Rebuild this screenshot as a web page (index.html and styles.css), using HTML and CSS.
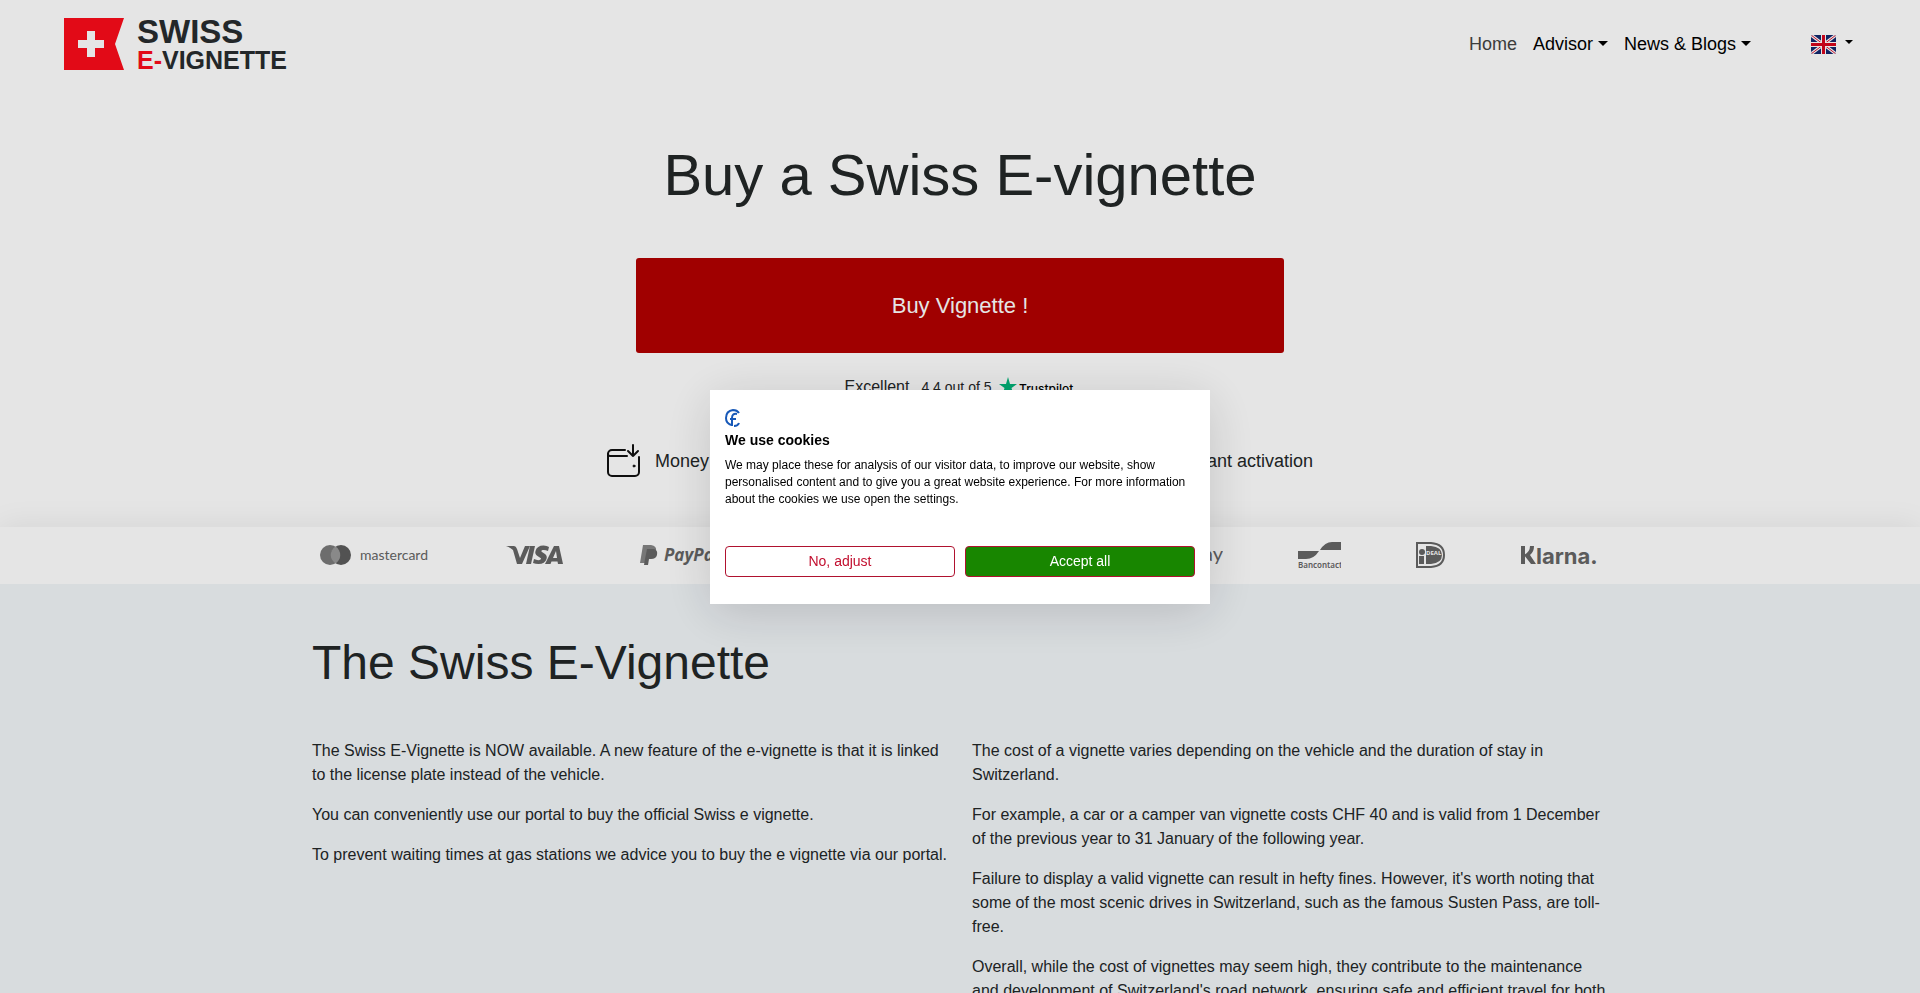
FILE: index.html
```html
<!DOCTYPE html>
<html lang="en">
<head>
<meta charset="utf-8">
<meta name="viewport" content="width=device-width, initial-scale=1">
<title>Buy a Swiss E-vignette</title>
<link rel="stylesheet" href="styles.css">
</head>
<body>
  <header class="header">
    <a href="#" class="logo" aria-label="Swiss E-Vignette">
      <svg width="240" height="64" viewBox="0 -6 240 64">
        <path fill="#fc0c1a" d="M0 0h60l-9 26 9 26H0z"/>
        <path fill="#fff" d="M23 13h8v9h9v8h-9v9h-8v-9h-9v-8h9z"/>
        <text class="logo-text" x="73" y="25" font-size="33">SWISS</text>
        <text class="logo-text" x="73" y="51" font-size="25"><tspan fill="#fc0c1a">E-</tspan>VIGNETTE</text>
      </svg>
    </a>
    <nav class="nav">
      <a href="#" class="nav-link active">Home</a>
      <a href="#" class="nav-link dropdown">Advisor</a>
      <a href="#" class="nav-link dropdown">News &amp; Blogs</a>
      <button type="button" class="lang" aria-label="Language">
        <svg width="25" height="19" viewBox="0 0 25 19">
          <clipPath id="flag"><rect width="25" height="19" rx="2"/></clipPath>
          <g clip-path="url(#flag)">
            <rect width="25" height="19" fill="#12286e"/>
            <path d="M0 0l25 19M25 0L0 19" stroke="#fff" stroke-width="3"/>
            <path d="M0 0l25 19M25 0L0 19" stroke="#dc1432" stroke-width="1"/>
            <path d="M12.5 0v19M0 9.5h25" stroke="#fff" stroke-width="5"/>
            <path d="M12.5 0v19M0 9.5h25" stroke="#d8061e" stroke-width="3"/>
          </g>
        </svg>
      </button>
    </nav>
  </header>

  <main>
    <section class="hero">
      <h1>Buy a Swiss E-vignette</h1>
      <a href="#" class="buy-btn">Buy Vignette !</a>
      <div class="trust">
        <span>Excellent</span>
        <span class="score">4.4 out of 5</span>
        <svg width="76" height="22" viewBox="0 0 76 22">
          <path fill="#00b67a" d="M9 1l2 7h7l-5.500 4 2 7L9 15l-5.500 4 2-7L0 8h7z"/>
          <text x="20" y="17" class="trust-text">Trustpilot</text>
        </svg>
      </div>
      <div class="features">
        <div class="feature">
          <svg width="33" height="33" viewBox="0 0 33 33" fill="none" stroke="#111" stroke-width="2" stroke-linecap="round" stroke-linejoin="round">
            <path d="M18 6H5a4 4 0 0 0-4 4v18a4 4 0 0 0 4 4h23a4 4 0 0 0 4-4V13"/>
            <path d="M1 10a2 2 0 0 0 2 2h17"/>
            <path d="M26 1v11M21 7l5 5 5-5"/>
            <circle cx="27" cy="22" r="1" fill="#111" stroke-width="1"/>
          </svg>
          Money back guarantee
        </div>
        <div class="feature">
          <svg width="33" height="33" viewBox="0 0 33 33" fill="none" stroke="#111" stroke-width="2" stroke-linejoin="round">
            <path d="M19 2L6 19h9l-2 12 14-18h-9z"/>
          </svg>
          Instant activation
        </div>
      </div>
    </section>

    <section class="payments">
      <div class="payments-list">
        <svg width="111" height="33" viewBox="0 0 111 33">
          <circle cx="10" cy="16" r="10" fill="#7a7a7a"/>
          <circle cx="21" cy="16" r="10" fill="#5c5c5c"/>
          <path d="M15.500 7.500a10 10 0 0 1 0 17a10 10 0 0 1 0-17z" fill="#999"/>
          <text x="40" y="21" font-family="Lato" font-size="14">mastercard</text>
        </svg>
        <svg width="57" height="33" viewBox="0 0 57 33">
          <path d="M0 7h8q2 0 3 3l3 9 5-12h5L16 25h-5L7 11Q4 8 0 7z"/>
          <path d="M24 7h5l-4 18h-5z"/>
          <path d="M43 8l-1 4q-3-1.500-5.500-1-2 .700-.500 2l3 2q2.500 2 1.500 5-1.500 5-8 5-3 0-5.500-1l1-4q3 1.500 5.500 1 2.500-.800 1-2l-3-2q-3-2-2-5Q31 6.500 37.500 6.500 41 6.600 43 8z"/>
          <path fill-rule="evenodd" d="M48 7h5l4 18h-5l-.500-2.500h-6L44.500 25H39zM50 12l-3 7h4z"/>
        </svg>
        <svg width="94" height="33" viewBox="-2 0 94 33">
          <path d="M3 6h8q6 1 5 6-1 6-8 6l-1 6H0z" fill="#858585"/>
          <path d="M7 10h7q4 1 3 6-1 4-6 4h-2l-1 6H4l1-6z"/>
          <text x="24" y="22" font-family="Open Sans" font-style="italic" font-weight="700" font-size="17">PayPal</text>
        </svg>
        <svg width="137" height="33" viewBox="0 0 137 33">
          <text x="4" y="21" font-family="Roboto" font-weight="700" font-size="15">American Express</text>
        </svg>
        <svg width="76" height="33" viewBox="0 0 76 33">
          <text x="0" y="21" font-family="Roboto" font-weight="500" font-size="16">Apple Pay</text>
        </svg>
        <svg width="54" height="33" viewBox="0 0 54 33">
          <text x="54" y="22" text-anchor="end" font-family="Lato" font-size="20">G Pay</text>
        </svg>
        <svg width="43" height="33" viewBox="0 0 43 33">
          <path d="M0 12h21q-5 8-13 8H0zM43 11H22q5-8 12-8h9z"/>
          <text x="0" y="29" font-family="Noto Sans" font-weight="600" font-size="8">Bancontact</text>
        </svg>
        <svg width="29" height="33" viewBox="0 0 29 33">
          <path d="M1 4h14q13 1 13 12T15 28H1z" fill="none" stroke="#666" stroke-width="2"/>
          <circle cx="6" cy="13" r="3"/>
          <path d="M3 17h5v8H3zM10 7h5q11 1 11 9t-11 9h-5z"/>
          <text x="10" y="16" font-family="Open Sans" font-weight="700" font-size="6" class="light">DEAL</text>
        </svg>
        <svg width="80" height="33" viewBox="0 0 80 33">
          <path d="M1 7h4v18H1zM10 7h4q0 6-4 9l6 9h-5l-7-9q6-3 6-9z"/>
          <text x="16" y="25" font-family="Inter" font-weight="700" font-size="22">larna.</text>
        </svg>
      </div>
    </section>

    <section class="info">
      <div class="container">
        <h2>The Swiss E-Vignette</h2>
        <div class="columns">
          <div>
            <p>The Swiss E-Vignette is NOW available. A new feature of the e-vignette is that it is linked to the license plate instead of the vehicle.</p>
            <p>You can conveniently use our portal to buy the official Swiss e vignette.</p>
            <p>To prevent waiting times at gas stations we advice you to buy the e vignette via our portal.</p>
          </div>
          <div>
            <p>The cost of a vignette varies depending on the vehicle and the duration of stay in Switzerland.</p>
            <p>For example, a car or a camper van vignette costs CHF 40 and is valid from 1 December of the previous year to 31 January of the following year.</p>
            <p>Failure to display a valid vignette can result in hefty fines. However, it's worth noting that some of the most scenic drives in Switzerland, such as the famous Susten Pass, are toll-free.</p>
            <p>Overall, while the cost of vignettes may seem high, they contribute to the maintenance and development of Switzerland's road network, ensuring safe and efficient travel for both residents and visitors.</p>
          </div>
        </div>
      </div>
    </section>
  </main>

  <div class="overlay">
    <div class="cookies" role="dialog" aria-labelledby="cookies-title">
      <svg width="16" height="18" viewBox="0 0 16 18" fill="none" stroke="#1859b8" stroke-width="2">
        <path d="M14 4Q12 1 8 1 1 2 1 9q0 5 5 7"/>
        <path d="M12 5Q7 4 7 9v8M5 10h6M9 17q4 0 5-3"/>
      </svg>
      <h3 id="cookies-title">We use cookies</h3>
      <p>We may place these for analysis of our visitor data, to improve our website, show personalised content and to give you a great website experience. For more information about the cookies we use open the settings.</p>
      <div class="cookies-buttons">
        <button type="button" class="btn-adjust">No, adjust</button>
        <button type="button" class="btn-accept">Accept all</button>
      </div>
    </div>
  </div>
</body>
</html>
```
FILE: styles.css
```css
* {
  box-sizing: border-box;
}

body {
  margin: 0;
  font-family: "Liberation Sans", Arial, sans-serif;
  font-size: 16px;
  line-height: 24px;
  color: #232728;
  background-color: #fff;
}

h1,
h2,
h3,
p {
  margin: 0;
}

h1,
h2 {
  font-weight: normal;
}

a {
  color: inherit;
  text-decoration: none;
}

svg {
  display: block;
  flex-shrink: 0;
}

/* Header */
.header {
  display: flex;
  justify-content: space-between;
  align-items: center;
  padding: 12px 63px 11px 64px;
}

.logo-text {
  font-weight: bold;
  fill: #282c2e;
}

.nav {
  display: flex;
  align-items: center;
  font-size: 18px;
  color: #000;
}

.nav-link {
  padding: 8px;
}

.nav-link.active {
  color: #444;
}

.dropdown::after,
.lang::after {
  content: "";
  display: inline-block;
  margin-left: 5px;
  vertical-align: 4px;
  border-top: 5px solid #000;
  border-left: 5px solid transparent;
  border-right: 5px solid transparent;
}

.lang {
  display: flex;
  align-items: center;
  gap: 4px;
  margin-left: 48px;
  padding: 4px;
  border: none;
  background: none;
  cursor: pointer;
}

.lang::after {
  margin-bottom: 4px;
  border-width: 4px;
  border-bottom: 0;
}

/* Hero */
.hero {
  display: flex;
  flex-direction: column;
  align-items: center;
  padding: 53px 12px 50px;
}

h1 {
  font-size: 58px;
  line-height: 70px;
  text-align: center;
}

.buy-btn {
  width: 100%;
  max-width: 648px;
  margin-top: 48px;
  padding: 32px;
  font-size: 22px;
  line-height: 31px;
  text-align: center;
  color: #fff;
  background-color: #b30000;
  border-radius: 3px;
}

.trust {
  display: flex;
  align-items: center;
  margin-top: 22px;
}

.score {
  margin: 0 8px 0 12px;
  font-size: 14px;
}

.trust-text {
  font-family: Inter, sans-serif;
  font-size: 12px;
  font-weight: 500;
}

.features {
  display: flex;
  justify-content: space-between;
  width: 100%;
  max-width: 706px;
  margin-top: 45px;
}

.feature {
  display: flex;
  align-items: center;
  gap: 15px;
  font-size: 18px;
}

/* Payment methods */
.payments {
  padding: 12px;
  background-color: #fff;
  box-shadow: 0 0 32px rgba(0, 0, 0, 0.08);
}

.payments-list {
  display: flex;
  flex-wrap: wrap;
  justify-content: space-between;
  max-width: 1280px;
  margin: 0 auto;
  fill: #666;
}

.light {
  fill: #fff;
}

/* Info */
.info {
  position: relative;
  padding: 50px 0;
  background-color: #f1f5f8;
}

.container {
  max-width: 1320px;
  margin: 0 auto;
  padding: 0 12px;
}

h2 {
  margin-bottom: 47px;
  font-size: 48px;
  line-height: 58px;
}

.columns {
  display: grid;
  grid-template-columns: 1fr 1fr;
  gap: 24px;
}

.columns p {
  margin-bottom: 16px;
}

/* Cookie dialog */
.overlay {
  position: fixed;
  inset: 0;
  display: flex;
  align-items: center;
  justify-content: center;
  background-color: rgba(0, 0, 0, 0.1);
}

.cookies {
  width: 500px;
  max-width: 100%;
  padding: 19px 15px 27px;
  font-size: 12px;
  line-height: 17px;
  color: #000;
  background-color: #fff;
  box-shadow: 0 8px 48px rgba(0, 0, 0, 0.15);
}

.cookies h3 {
  margin: 4px 0 8px;
  font-size: 14px;
  line-height: 18px;
}

.cookies-buttons {
  display: flex;
  gap: 10px;
  margin-top: 38px;
}

.cookies-buttons button {
  flex: 1;
  height: 31px;
  font-family: inherit;
  font-size: 14px;
  border: 1px solid #b0122f;
  border-radius: 4px;
  cursor: pointer;
}

.btn-adjust {
  color: #c20f2f;
  background-color: #fff;
}

.btn-accept {
  color: #fff;
  background-color: #188600;
}
```
